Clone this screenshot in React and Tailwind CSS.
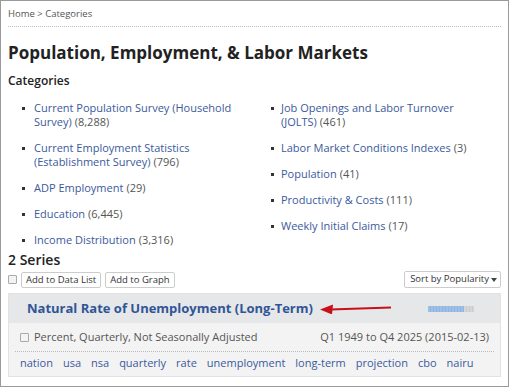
const LEFT = [
  { lines: ['Current Population Survey (Household', 'Survey)'], count: '8,288' },
  { lines: ['Current Employment Statistics', '(Establishment Survey)'], count: '796' },
  { lines: ['ADP Employment'], count: '29' },
  { lines: ['Education'], count: '6,445' },
  { lines: ['Income Distribution'], count: '3,316' },
]

const RIGHT = [
  { lines: ['Job Openings and Labor Turnover', '(JOLTS)'], count: '461' },
  { lines: ['Labor Market Conditions Indexes'], count: '3' },
  { lines: ['Population'], count: '41' },
  { lines: ['Productivity & Costs'], count: '111' },
  { lines: ['Weekly Initial Claims'], count: '17' },
]

const TAGS = ['nation', 'usa', 'nsa', 'quarterly', 'rate', 'unemployment', 'long-term', 'projection', 'cbo', 'nairu']

function CategoryList({ items, gap }) {
  return (
    <ul className="flex flex-col gap-[12px]">
      {items.map((c) => (
        <li key={c.lines[0]} className={`flex items-start ${gap}`}>
          <span className="mt-[6px] w-[3px] h-[3px] bg-[#333] shrink-0" />
          <div className="leading-[14px] flex flex-col">
            {c.lines.map((line, i) => (
              <div key={line} className="flex gap-[3px] whitespace-nowrap">
                <a className="text-[#3a5a9c]">{line}</a>
                {i === c.lines.length - 1 && <span className="text-[#555]">({c.count})</span>}
              </div>
            ))}
          </div>
        </li>
      ))}
    </ul>
  )
}

function Checkbox() {
  return <span className="inline-block w-[9px] h-[9px] border border-[#aaa] bg-[#f3f3f3] rounded-[1px] shrink-0" />
}

export default function App() {
  return (
    <div className="w-[510px] h-[389px] bg-white font-['Open_Sans',sans-serif] text-[#333]">
      <div className="w-[509px] h-[387px] border border-[#9a9a9a] px-[7px] pt-[7px]">
        {/* breadcrumb */}
        <div className="text-[9.5px] text-[#555] leading-[12px] pb-[6px] border-b border-dotted border-[#bbb]">
          Home &gt; Categories
        </div>

        <h1 className="mt-[13px] text-[17px] font-bold text-[#222] leading-[26px]">
          Population, Employment, &amp; Labor Markets
        </h1>
        <h2 className="mt-[6px] text-[12px] font-semibold text-[#222] leading-[18px]">Categories</h2>

        <div className="mt-[11px] grid grid-cols-[249px_1fr] text-[11px] pl-[14px]">
          <CategoryList items={LEFT} gap="gap-[9px]" />
          <CategoryList items={RIGHT} gap="gap-[7px]" />
        </div>

        <h2 className="mt-[5px] text-[14px] font-semibold text-[#222] leading-[16px]">2 Series</h2>

        <div className="mt-[3px] flex items-center text-[9.5px] text-[#333]">
          <Checkbox />
          <button className="ml-[4px] h-[16px] px-[4px] border border-[#ccc] rounded-[2px] bg-white leading-[14px]">
            Add to Data List
          </button>
          <button className="ml-[4px] h-[16px] px-[4px] border border-[#ccc] rounded-[2px] bg-white leading-[14px]">
            Add to Graph
          </button>
          <button className="ml-auto h-[17px] pl-[5px] pr-[3px] border border-[#ccc] rounded-[2px] bg-white flex items-center gap-[2px]">
            Sort by Popularity
            <svg width="6" height="4" viewBox="0 0 6 4"><path d="M0 0h6L3 4z" fill="#444" /></svg>
          </button>
        </div>

        <div className="mt-[5px] border border-[#e2e2e2] bg-[#f3f3f3]">
          <div className="h-[29px] bg-[#e6e7e9] flex items-center pl-[18px] pr-[26px]">
            <a className="text-[13px] font-bold text-[#2f5597]">Natural Rate of Unemployment (Long-Term)</a>
            <svg className="ml-[7px]" width="72" height="10" viewBox="0 0 72 10">
              <path d="M10 5.5 L71 3.5" stroke="#c8101a" strokeWidth="2" />
              <path d="M0 5.5 L13 0.5 L12 10.5 Z" fill="#c8101a" />
            </svg>
            <div className="ml-auto flex h-[6px]">
              <div className="w-[36px] bg-[repeating-linear-gradient(90deg,#9ec0e6_0,#9ec0e6_2px,#8fb3dd_2px,#8fb3dd_3px)]" />
              <div className="w-[10px] bg-[repeating-linear-gradient(90deg,#d6d6d6_0,#d6d6d6_2px,#cccccc_2px,#cccccc_3px)]" />
            </div>
          </div>
          <div className="px-[6px] pt-[6px] pb-[5px]">
            <div className="flex items-center text-[11px] text-[#555] pb-[5px] border-b border-dotted border-[#bbb] px-[5px]">
              <Checkbox />
              <span className="ml-[5px]">Percent, Quarterly, Not Seasonally Adjusted</span>
              <span className="ml-auto">Q1 1949 to Q4 2025 (2015-02-13)</span>
            </div>
            <div className="flex gap-[10px] text-[11px] text-[#3a5a9c] pt-[3px] pl-[5px]">
              {TAGS.map((t) => (
                <a key={t}>{t}</a>
              ))}
            </div>
          </div>
        </div>
      </div>
    </div>
  )
}
